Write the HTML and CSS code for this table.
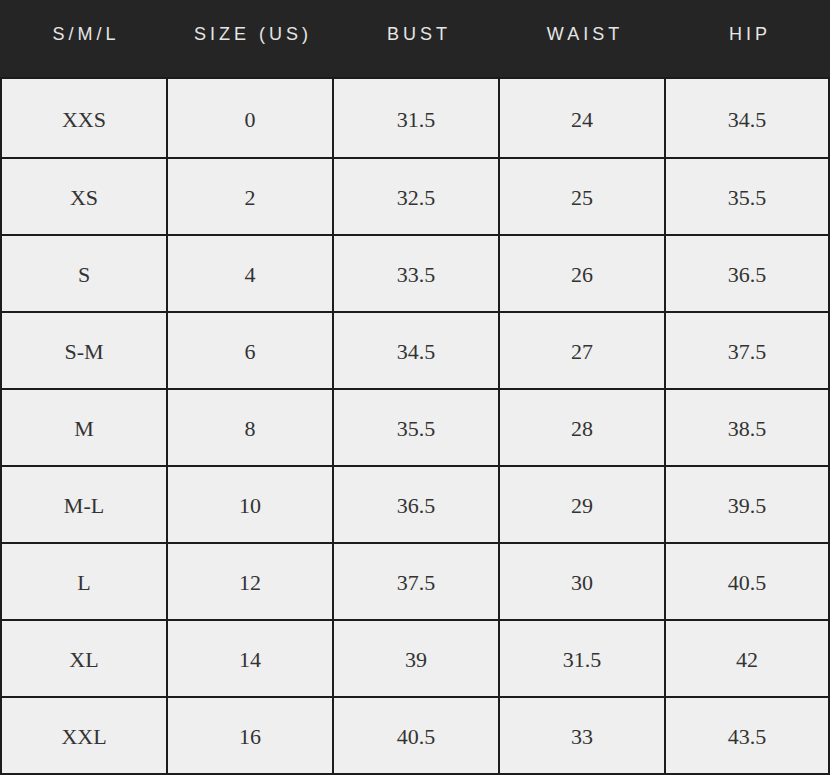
FILE: index.html
```html
<!DOCTYPE html>
<html>
<head>
<meta charset="utf-8">
<link rel="stylesheet" href="styles.css">
</head>
<body>
<table class="size-chart">
  <colgroup>
    <col class="c1"><col class="c2"><col class="c3"><col class="c4"><col class="c5">
  </colgroup>
  <thead>
    <tr>
      <th>S/M/L</th>
      <th>SIZE (US)</th>
      <th>BUST</th>
      <th>WAIST</th>
      <th>HIP</th>
    </tr>
  </thead>
  <tbody>
    <tr class="first"><td>XXS</td><td>0</td><td>31.5</td><td>24</td><td>34.5</td></tr>
    <tr><td>XS</td><td>2</td><td>32.5</td><td>25</td><td>35.5</td></tr>
    <tr><td>S</td><td>4</td><td>33.5</td><td>26</td><td>36.5</td></tr>
    <tr><td>S-M</td><td>6</td><td>34.5</td><td>27</td><td>37.5</td></tr>
    <tr><td>M</td><td>8</td><td>35.5</td><td>28</td><td>38.5</td></tr>
    <tr><td>M-L</td><td>10</td><td>36.5</td><td>29</td><td>39.5</td></tr>
    <tr><td>L</td><td>12</td><td>37.5</td><td>30</td><td>40.5</td></tr>
    <tr><td>XL</td><td>14</td><td>39</td><td>31.5</td><td>42</td></tr>
    <tr><td>XXL</td><td>16</td><td>40.5</td><td>33</td><td>43.5</td></tr>
  </tbody>
</table>
</body>
</html>
```
FILE: styles.css
```css
html, body {
  margin: 0;
  padding: 0;
  background: #ffffff;
}

.size-chart {
  width: 830px;
  border-collapse: separate;
  border-spacing: 0;
  table-layout: fixed;
  background: #252525;
}

.size-chart .c1 { width: 168px; }
.size-chart .c2 { width: 166px; }
.size-chart .c3 { width: 166px; }
.size-chart .c4 { width: 166px; }
.size-chart .c5 { width: 164px; }

.size-chart th {
  height: 77px;
  padding: 0 0 8px 4px;
  box-sizing: border-box;
  background: #252525;
  color: #e6e6e6;
  font-family: "Liberation Sans", Arial, sans-serif;
  font-weight: normal;
  font-size: 18px;
  letter-spacing: 4px;
  text-align: center;
  vertical-align: middle;
}

.size-chart td {
  height: 77px;
  box-sizing: border-box;
  padding: 2px 0 0 0;
  background: #efefef;
  color: #333333;
  font-family: "Liberation Serif", "Times New Roman", serif;
  font-size: 22px;
  text-align: center;
  vertical-align: middle;
  border-right: 2px solid #1c1c1c;
  border-bottom: 2px solid #1c1c1c;
}

.size-chart td:first-child {
  border-left: 2px solid #1c1c1c;
}

.size-chart tr.first td {
  height: 82px;
  padding-top: 4px;
  border-top: 2px solid #1c1c1c;
}
```
